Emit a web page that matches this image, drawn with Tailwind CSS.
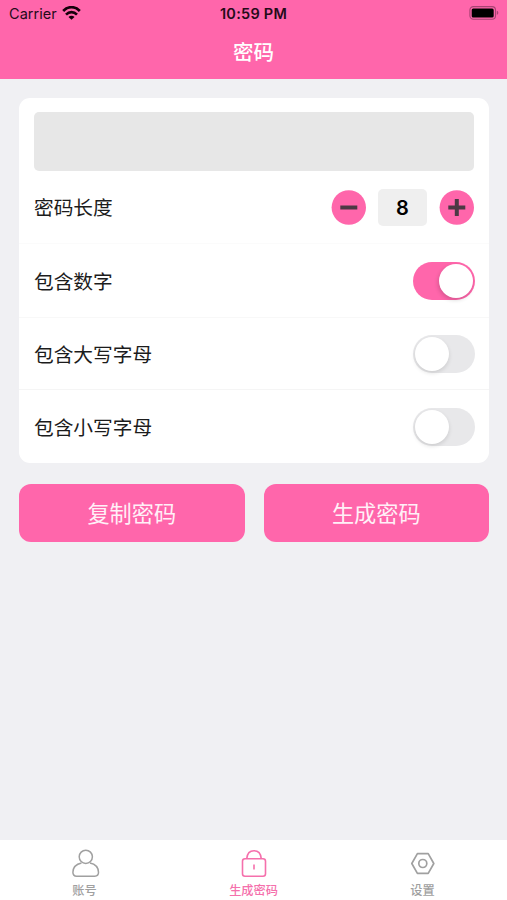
<!DOCTYPE html>
<html lang="zh-CN">
<head>
<meta charset="utf-8">
<title>密码</title>
<script src="https://cdn.jsdelivr.net/npm/@tailwindcss/browser@4"></script>
</head>
<body class="w-[507px] h-[900px] overflow-hidden flex flex-col bg-[#f0f0f3] text-[#1c1c1c] font-['Inter','Noto_Sans_CJK_SC',sans-serif]">
<header class="h-[79px] shrink-0 bg-[#ff66ab] flex flex-col">
  <div class="h-[27px] grid grid-cols-3 items-center pl-[8px] pr-[8px] text-[#250b19]">
    <div class="flex items-center gap-[5px] pl-[1px]">
      <span class="text-[14.5px] leading-[20px] tracking-[0.05px]">Carrier</span>
      <svg class="w-[19px] h-[14px] -mt-[2px]" viewBox="0 0 19 14" fill="none" stroke="#16000b" stroke-width="2.7"><path d="M1.200 5C6-.1 13-.1 17.800 5M4 8.600c3.200-3.200 7.800-3.200 11 0"/><path d="M9.500 13.800 6.500 10.900c1.600-1.700 4.400-1.700 6 0z" fill="#16000b" stroke="none"/></svg>
    </div>
    <span class="text-[14.500px] leading-[20px] font-semibold text-center whitespace-nowrap tracking-[0.25px]">10:59 PM</span>
    <svg class="w-[30px] h-[14px] justify-self-end -mt-[1px]" viewBox="0 0 30 14"><rect x=".9" y=".6" width="25.6" height="12.6" rx="3.5" fill="none" stroke="#a84373" stroke-width="1.1"/><rect x="2.7" y="2.4" width="22" height="9" rx="1.500" fill="#000"/><path d="M27.800 4.800c2 .7 2 3.500 0 4.200z" fill="#a84373"/></svg>
  </div>
  <h1 class="text-white text-[20.5px] leading-[52px] font-medium text-center">密码</h1>
</header>
<main class="flex-1 px-[19px] pt-[19px]">
  <section class="bg-white rounded-[11px] h-[365px] pt-[14px] w-[470px]">
    <div class="h-[59px] mx-[15px] rounded-[5px] bg-[#e7e7e7]"></div>
    <div class="h-[73px] px-[15px] flex items-center justify-between border-b border-[#fbfbfb]">
      <span class="text-[19.7px] pt-[4px]">密码长度</span>
      <div class="flex items-center">
        <svg class="w-[35px] h-[35px]" viewBox="0 0 35 35"><circle cx="17.8" cy="17.5" r="17.2" fill="#ff66ab"/><path d="M9.300 17.500h17" stroke="#4c3944" stroke-width="4"/></svg>
        <span class="w-[49px] h-[37px] mx-[12px] rounded-[5px] bg-[#efefef] text-black text-[20px] font-semibold flex items-center justify-center pt-[1px]">8</span>
        <svg class="w-[35px] h-[35px]" viewBox="0 0 35 35"><circle cx="17.8" cy="17.5" r="17.2" fill="#ff66ab"/><path d="M9.300 17.500h17M17.800 9v17" stroke="#4c3944" stroke-width="4"/></svg>
      </div>
    </div>
    <div class="h-[74px] pl-[15px] pr-[14px] flex items-center justify-between border-b border-[#f8f8f8]">
      <span class="text-[19.7px] pt-[4px]">包含数字</span>
      <div class="w-[62px] h-[38px] rounded-full bg-[#ff66ab] p-[2px] flex justify-end"><div class="size-[34px] rounded-full bg-white shadow-[-1px_2px_4px_rgba(0,0,0,0.16)]"></div></div>
    </div>
    <div class="h-[72px] pl-[15px] pr-[14px] flex items-center justify-between border-b border-[#f5f5f5]">
      <span class="text-[19.7px] pt-[4px]">包含大写字母</span>
      <div class="w-[62px] h-[38px] rounded-full bg-[#e8e8ea] p-[2px] flex"><div class="size-[34px] rounded-full bg-white shadow-[0_2px_4px_rgba(0,0,0,0.12)]"></div></div>
    </div>
    <div class="h-[73px] pl-[15px] pr-[14px] pt-[1px] flex items-center justify-between">
      <span class="text-[19.7px] pt-[3px]">包含小写字母</span>
      <div class="w-[62px] h-[38px] rounded-full bg-[#e8e8ea] p-[2px] flex"><div class="size-[34px] rounded-full bg-white shadow-[0_2px_4px_rgba(0,0,0,0.12)]"></div></div>
    </div>
  </section>
  <div class="flex gap-[19px] mt-[21px] w-[470px]">
    <button class="flex-1 h-[58px] rounded-[12px] bg-[#ff66ab] text-[#fff0f7] text-[22.2px] pt-[2px]">复制密码</button>
    <button class="flex-1 h-[58px] rounded-[12px] bg-[#ff66ab] text-[#fff0f7] text-[22.2px] pt-[2px]">生成密码</button>
  </div>
</main>
<nav class="h-[60px] shrink-0 bg-white grid grid-cols-3 text-[12.2px] leading-[16px] font-medium text-[#a0a0a0]">
  <div class="flex flex-col items-center pt-[8px]">
    <svg class="w-[30px] h-[32px]" viewBox="0 0 30 32" fill="none" stroke="currentColor" stroke-width="1.5"><circle cx="15.800" cy="8.800" r="6.600"/><path d="M11.500 15C6.500 16 3 19.500 2.900 24.300c0 2.400 1.400 3.900 3.700 3.900h18.200c2.300 0 3.700-1.500 3.700-3.900-.1-4.800-3.600-8.300-8.600-9.300"/></svg>
    <span class="mt-[3px]">账号</span>
  </div>
  <div class="flex flex-col items-center pt-[8px] text-[#f570ac]">
    <svg class="w-[30px] h-[32px]" viewBox="0 0 30 32" fill="none" stroke="currentColor" stroke-width="1.6"><rect x="3.500" y="10.700" width="23" height="17.500" rx="2.500"/><path d="M7.800 10.400C8.200 5.500 10.900 2.700 15 2.700s6.800 2.800 7.200 7.700M15 16.500v5"/></svg>
    <span class="mt-[3px]">生成密码</span>
  </div>
  <div class="flex flex-col items-center pt-[8px]">
    <svg class="w-[30px] h-[32px]" viewBox="0 0 30 32" fill="none" stroke="currentColor" stroke-width="1.700" stroke-linejoin="round"><path d="M9.400 5.600h10.800L25.800 15.500l-5.600 9.900H9.400L3.800 15.500z"/><circle cx="14.800" cy="15.500" r="4"/></svg>
    <span class="mt-[3px]">设置</span>
  </div>
</nav>
</body>
</html>
